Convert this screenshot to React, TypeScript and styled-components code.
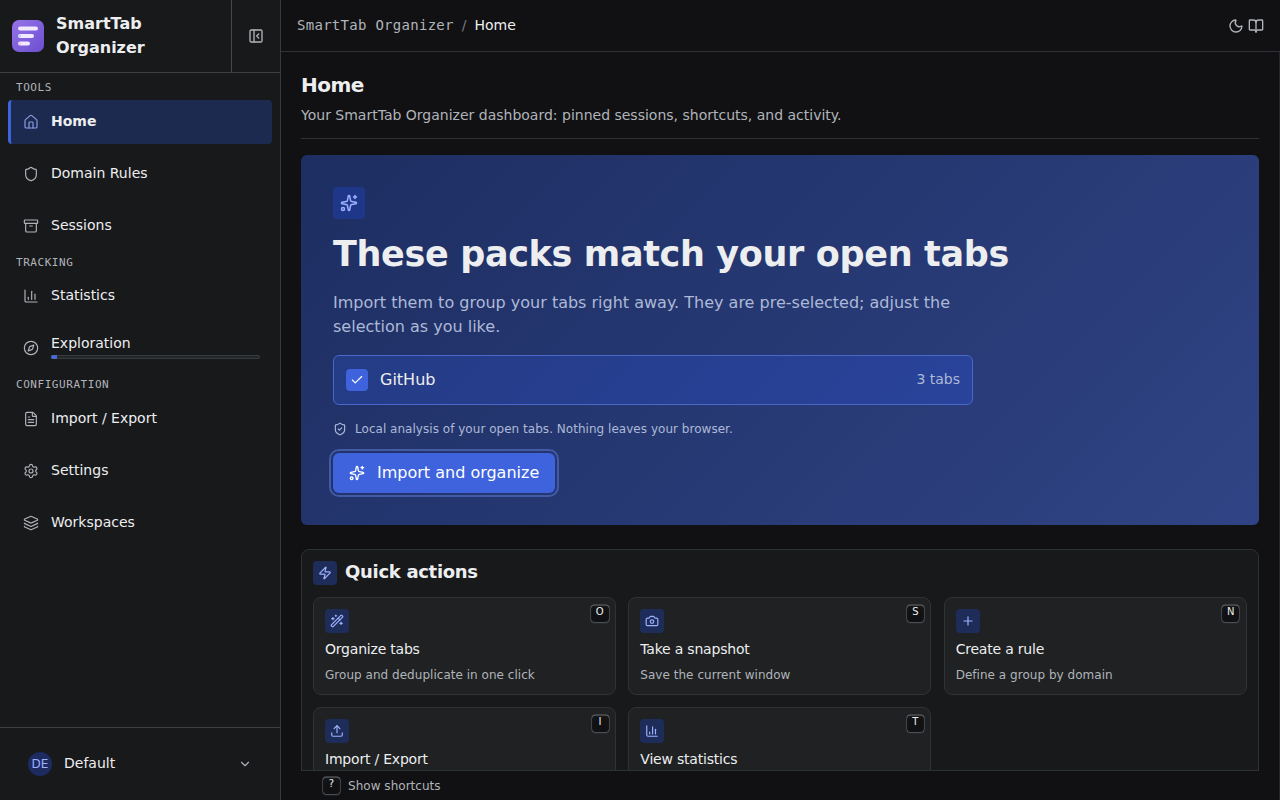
import React from 'react';
import styled, { createGlobalStyle, css } from 'styled-components';
import {
  Archive,
  BookOpen,
  Camera,
  ChartColumn,
  Check,
  ChevronDown,
  Compass,
  FileText,
  House,
  Layers,
  Moon,
  PanelLeftClose,
  Plus,
  Settings,
  Shield,
  ShieldCheck,
  Sparkles,
  Upload,
  WandSparkles,
  Zap,
  type LucideIcon,
} from 'lucide-react';

const sans = `'DejaVu Sans', sans-serif`;
const mono = `'DejaVu Sans Mono', monospace`;

const GlobalStyle = createGlobalStyle`
  *, *::before, *::after { box-sizing: border-box; }
  body {
    margin: 0;
    background: #111113;
    color: #edeef0;
    font-family: ${sans};
    overflow: hidden;
  }
  h1, h2, h3, p { margin: 0; }
  button { font: inherit; color: inherit; border: 0; background: none; padding: 0; }
  svg { display: block; flex: none; }
`;

const Shell = styled.div`
  display: flex;
  height: 800px;
`;

const Sidebar = styled.aside`
  display: flex;
  flex-direction: column;
  flex: none;
  width: 281px;
  background: #18191b;
  border-right: 1px solid #363a3f;
`;

const SidebarHeader = styled.header`
  display: flex;
  height: 73px;
  border-bottom: 1px solid #3c4045;
`;

const Brand = styled.div`
  display: flex;
  align-items: center;
  gap: 12px;
  flex: 1;
  padding-left: 12px;
  font-size: 16px;
  font-weight: 700;
  line-height: 24px;

  span { width: 120px; }
`;

const CollapseButton = styled.button`
  display: flex;
  align-items: center;
  justify-content: center;
  width: 49px;
  border-left: 1px solid #43484e;
  color: #b0b4ba;
`;

const Nav = styled.nav`
  flex: 1;
  padding: 0 8px;
`;

const SectionLabel = styled.div`
  height: 26.5px;
  padding: 7px 8px 0;
  font-family: ${mono};
  font-size: 11px;
  line-height: 16.5px;
  letter-spacing: 0.55px;
  text-transform: uppercase;
  color: #b0b4ba;
`;

const NavItems = styled.div`
  display: flex;
  flex-direction: column;
  gap: 8px;
`;

const NavItem = styled.a<{ $active?: boolean }>`
  display: flex;
  align-items: center;
  gap: 12px;
  height: 44px;
  padding: 0 12px;
  border-left: 3px solid transparent;
  border-radius: 4px;
  font-size: 14px;
  line-height: 20px;

  svg { color: #b0b4ba; }

  ${({ $active }) =>
    $active &&
    css`
      background: #1c2a50;
      border-left-color: #3e63dd;
      font-weight: 700;
      svg { color: #9eb1ff; opacity: 0.85; }
    `}
`;

const NavText = styled.div`
  flex: 1;
  padding-bottom: 2px;
`;

const ProgressTrack = styled.div`
  height: 4px;
  margin: 2px 0;
  border-radius: 2px;
  background: #25282b;
  box-shadow: inset 0 0 0 1px #363a3f;
  overflow: hidden;
`;

const ProgressFill = styled.div`
  height: 100%;
  background: #4a6ad0;
`;

const SidebarFooter = styled.footer`
  display: flex;
  align-items: center;
  height: 73px;
  padding: 0 28px;
  border-top: 1px solid #3c4045;
  font-size: 14px;
  color: #edeef0;

  svg { color: #b0b4ba; }
`;

const Avatar = styled.span`
  display: flex;
  align-items: center;
  justify-content: center;
  width: 24px;
  height: 24px;
  margin-right: 12px;
  border-radius: 50%;
  background: #1d2b60;
  color: #9eb1ff;
  font-size: 12px;
`;

const WorkspaceName = styled.span`
  flex: 1;
  padding-bottom: 2px;
`;

const Main = styled.main`
  display: flex;
  flex-direction: column;
  flex: 1;
  min-width: 0;
`;

const TopBar = styled.div`
  display: flex;
  align-items: center;
  flex: none;
  height: 52px;
  padding: 0 16px;
  border-bottom: 1px solid #2e3135;
`;

const Breadcrumb = styled.div`
  display: flex;
  gap: 8px;
  flex: 1;
  padding-bottom: 2px;
  font-size: 14px;
  line-height: 20px;
`;

const Crumb = styled.span`
  font-family: ${mono};
  letter-spacing: 0.28px;
  color: #b0b4ba;
`;

const Slash = styled.span`
  color: #777b84;
`;

const TopActions = styled.div`
  display: flex;
  gap: 4px;
  color: #b0b4ba;
`;

const Page = styled.div`
  display: flex;
  flex-direction: column;
  flex: 1;
  min-height: 0;
  padding: 0 20px;
  border-right: 1px solid #25272a;
`;

const PageBody = styled.div`
  flex: 1;
  min-height: 0;
  overflow: hidden;
`;

const PageHeader = styled.header`
  height: 87px;
  padding-top: 19px;
  border-bottom: 1px solid #2e3135;

  h1 {
    font-size: 20px;
    line-height: 28px;
    letter-spacing: -0.5px;
  }
  p {
    margin-top: 6px;
    font-size: 14px;
    line-height: 20px;
    color: #b0b4ba;
  }
`;

const Hero = styled.section`
  display: flex;
  flex-direction: column;
  align-items: flex-start;
  height: 370px;
  margin-top: 16px;
  padding: 32px;
  border-radius: 6px;
  background: linear-gradient(135deg, #1d2e62, #304384);
`;

const IconTile = styled.span<{ $size: number; $bg?: string }>`
  display: flex;
  align-items: center;
  justify-content: center;
  flex: none;
  width: ${({ $size }) => $size}px;
  height: ${({ $size }) => $size}px;
  border-radius: 4px;
  background: ${({ $bg }) => $bg || '#1e2c5a'};
  color: #9eb1ff;
`;

const HeroTitle = styled.h2`
  margin-top: 15px;
  font-size: 35px;
  line-height: 40px;
  letter-spacing: -0.35px;
`;

const HeroText = styled.p`
  width: 640px;
  margin-top: 17px;
  font-size: 16px;
  line-height: 24px;
  color: #adb9d7;
`;

const PackRow = styled.label`
  display: flex;
  align-items: center;
  width: 640px;
  height: 50px;
  margin-top: 16px;
  padding: 0 12px;
  border: 1px solid #4a68c8;
  border-radius: 6px;
  background: linear-gradient(135deg, #243b85, #29439b);
  font-size: 16px;
`;

const PackName = styled.span`
  padding-bottom: 2px;
`;

const Checkbox = styled.span`
  display: flex;
  align-items: center;
  justify-content: center;
  width: 22px;
  height: 22px;
  margin-right: 12px;
  border-radius: 4px;
  background: #3e63dd;
  color: #fff;
`;

const PackCount = styled.span`
  margin-left: auto;
  padding-bottom: 2px;
  font-size: 14px;
  color: #adb9d7;
`;

const PrivacyNote = styled.p`
  display: flex;
  align-items: center;
  gap: 8px;
  margin-top: 16px;
  font-size: 12px;
  line-height: 16px;
  letter-spacing: 0.03px;
  color: #adb9d7;
`;

const PrimaryButton = styled.button`
  display: flex;
  align-items: center;
  gap: 12px;
  height: 40px;
  margin-top: 16px;
  padding: 0 16px;
  border-radius: 6px;
  background: #3e63dd;
  color: #fff;
  font-size: 16px;
  outline: 2px solid #435ba5;
  outline-offset: 2px;

  span { padding-bottom: 2px; }
`;

const Panel = styled.section`
  margin-top: 24px;
  padding: 11px;
  border: 1px solid #2e3135;
  border-radius: 8px;
  background: #18191b;
`;

const PanelTitle = styled.div`
  display: flex;
  gap: 8px;
  height: 24px;

  h2 {
    font-size: 18px;
    line-height: 22px;
    letter-spacing: -0.3px;
  }
`;

const CardGrid = styled.div`
  display: grid;
  grid-template-columns: repeat(3, 1fr);
  gap: 12px;
  margin-top: 12px;
`;

const Card = styled.article`
  position: relative;
  width: 303px;
  height: 98px;
  padding: 11px;
  border: 1px solid #303336;
  border-radius: 8px;
  background: #1f2122;

  h3 {
    margin-top: 6px;
    font-size: 14px;
    font-weight: 400;
    line-height: 20px;
    letter-spacing: -0.21px;
  }
  p {
    margin-top: 8px;
    font-size: 12px;
    line-height: 16px;
    letter-spacing: 0.03px;
    color: #b0b4ba;
  }
`;

const Kbd = styled.kbd`
  display: inline-flex;
  justify-content: center;
  flex: none;
  min-width: 17px;
  height: 17.5px;
  padding: 0 4.8px;
  border-radius: 3.5px;
  background: #111113;
  box-shadow:
    inset 0 0.5px 0 rgba(255, 255, 255, 0.4),
    inset 0 2.5px 5px rgba(216, 244, 246, 0.04),
    0 0 0 0.5px #5a6169,
    0 0.8px 1.7px #43484e;
  color: #edeef0;
  font-family: ${sans};
  font-size: 10px;
  line-height: 14px;
`;

const CardKey = styled(Kbd)`
  position: absolute;
  top: 6.5px;
  right: 6.5px;
`;

const PageFooter = styled.footer`
  display: flex;
  align-items: center;
  gap: 8px;
  flex: none;
  height: 30px;
  padding-left: 22px;
  border-top: 1px solid #2e3135;
  font-size: 12px;
  letter-spacing: 0.03px;
  color: #b0b4ba;
`;

interface NavEntry {
  label: string;
  icon: LucideIcon;
  active?: boolean;
  progress?: number;
}

const sections: { title: string; items: NavEntry[] }[] = [
  {
    title: 'Tools',
    items: [
      { label: 'Home', icon: House, active: true },
      { label: 'Domain Rules', icon: Shield },
      { label: 'Sessions', icon: Archive },
    ],
  },
  {
    title: 'Tracking',
    items: [
      { label: 'Statistics', icon: ChartColumn },
      { label: 'Exploration', icon: Compass, progress: 3 },
    ],
  },
  {
    title: 'Configuration',
    items: [
      { label: 'Import / Export', icon: FileText },
      { label: 'Settings', icon: Settings },
      { label: 'Workspaces', icon: Layers },
    ],
  },
];

const actions: { title: string; text?: string; keyName: string; icon: LucideIcon }[] = [
  { title: 'Organize tabs', text: 'Group and deduplicate in one click', keyName: 'O', icon: WandSparkles },
  { title: 'Take a snapshot', text: 'Save the current window', keyName: 'S', icon: Camera },
  { title: 'Create a rule', text: 'Define a group by domain', keyName: 'N', icon: Plus },
  { title: 'Import / Export', keyName: 'I', icon: Upload },
  { title: 'View statistics', keyName: 'T', icon: ChartColumn },
];

function Logo() {
  return (
    <svg width="32" height="32" viewBox="0 0 32 32">
      <defs>
        <linearGradient id="logo" x1="0" y1="0" x2="1" y2="1">
          <stop offset="0" stopColor="#9673ea" />
          <stop offset="1" stopColor="#6c4fcf" />
        </linearGradient>
      </defs>
      <rect width="32" height="32" rx="7" fill="url(#logo)" />
      <rect x="6" y="6.5" width="20" height="4" rx="2" fill="#f1e9fd" />
      <rect x="6" y="14" width="16" height="4" rx="2" fill="#f1e9fd" />
      <rect x="6" y="21.5" width="12" height="4" rx="2" fill="#f1e9fd" />
      <circle cx="8" cy="16" r="1.2" fill="#a9d8f5" />
      <circle cx="8" cy="23.5" r="1.2" fill="#f5c3d4" />
    </svg>
  );
}

export default function App() {
  return (
    <Shell>
      <GlobalStyle />
      <Sidebar>
        <SidebarHeader>
          <Brand>
            <Logo />
            <span>SmartTab Organizer</span>
          </Brand>
          <CollapseButton aria-label="Collapse sidebar">
            <PanelLeftClose size={16} />
          </CollapseButton>
        </SidebarHeader>
        <Nav>
          {sections.map((section) => (
            <React.Fragment key={section.title}>
              <SectionLabel>{section.title}</SectionLabel>
              <NavItems>
                {section.items.map(({ label, icon: Icon, active, progress }) => (
                  <NavItem key={label} $active={active}>
                    <Icon size={16} strokeWidth={1.75} />
                    <NavText>
                      {label}
                      {progress !== undefined && (
                        <ProgressTrack>
                          <ProgressFill style={{ width: `${progress}%` }} />
                        </ProgressTrack>
                      )}
                    </NavText>
                  </NavItem>
                ))}
              </NavItems>
            </React.Fragment>
          ))}
        </Nav>
        <SidebarFooter>
          <Avatar>DE</Avatar>
          <WorkspaceName>Default</WorkspaceName>
          <ChevronDown size={14} />
        </SidebarFooter>
      </Sidebar>
      <Main>
        <TopBar>
          <Breadcrumb>
            <Crumb>SmartTab Organizer</Crumb>
            <Slash>/</Slash>
            <span>Home</span>
          </Breadcrumb>
          <TopActions>
            <Moon size={16} />
            <BookOpen size={16} />
          </TopActions>
        </TopBar>
        <Page>
          <PageBody>
            <PageHeader>
              <h1>Home</h1>
              <p>Your SmartTab Organizer dashboard: pinned sessions, shortcuts, and activity.</p>
            </PageHeader>
            <Hero>
              <IconTile $size={32} $bg="#1f3788">
                <Sparkles size={18} />
              </IconTile>
              <HeroTitle>These packs match your open tabs</HeroTitle>
              <HeroText>
                Import them to group your tabs right away. They are pre-selected; adjust the
                selection as you like.
              </HeroText>
              <PackRow>
                <Checkbox>
                  <Check size={14} />
                </Checkbox>
                <PackName>GitHub</PackName>
                <PackCount>3 tabs</PackCount>
              </PackRow>
              <PrivacyNote>
                <ShieldCheck size={14} />
                Local analysis of your open tabs. Nothing leaves your browser.
              </PrivacyNote>
              <PrimaryButton>
                <Sparkles size={16} />
                <span>Import and organize</span>
              </PrimaryButton>
            </Hero>
            <Panel>
              <PanelTitle>
                <IconTile $size={24}>
                  <Zap size={14} />
                </IconTile>
                <h2>Quick actions</h2>
              </PanelTitle>
              <CardGrid>
                {actions.map(({ title, text, keyName, icon: Icon }) => (
                  <Card key={title}>
                    <IconTile $size={24}>
                      <Icon size={14} />
                    </IconTile>
                    <h3>{title}</h3>
                    {text && <p>{text}</p>}
                    <CardKey>{keyName}</CardKey>
                  </Card>
                ))}
              </CardGrid>
            </Panel>
          </PageBody>
          <PageFooter>
            <Kbd>?</Kbd>
            Show shortcuts
          </PageFooter>
        </Page>
      </Main>
    </Shell>
  );
}
